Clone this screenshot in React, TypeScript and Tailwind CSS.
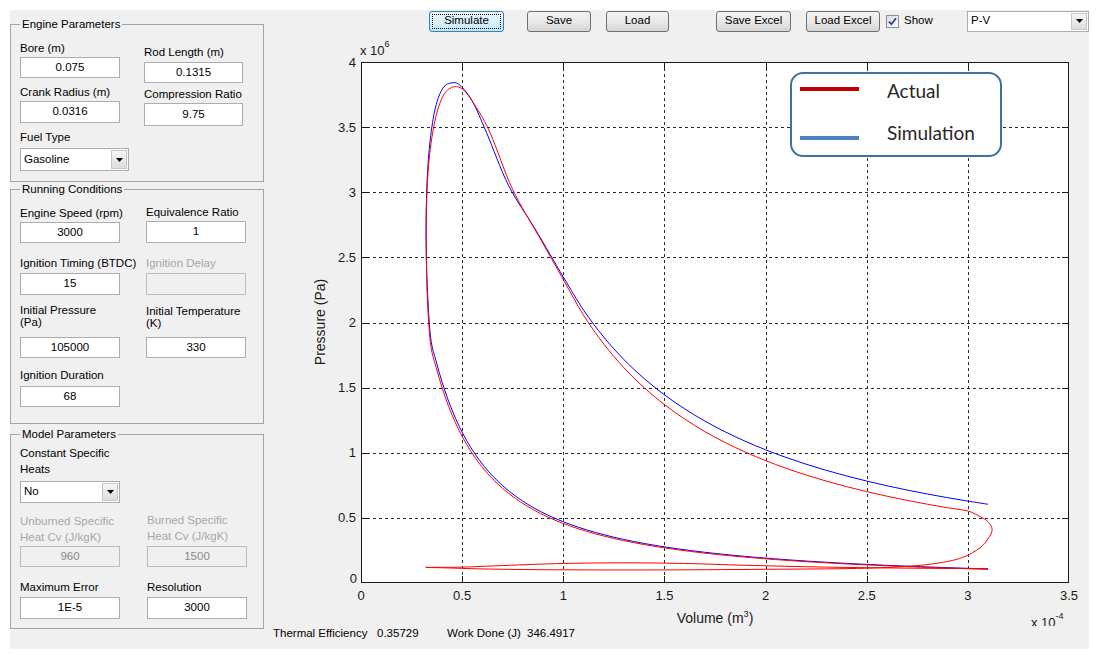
import React from "react";

type Pt = [number, number];

// plot box in page pixels
const X0 = 361;
const X1 = 1069;
const Y0 = 583;
const Y1 = 62;
const px = (v: number) => X0 + (v / 3.5) * (X1 - X0);
const py = (p: number) => Y0 - (p / 4) * (Y0 - Y1);

// catmull-rom through the points, as cubic beziers
function curve(pts: Pt[]) {
  const q = pts.map(([v, p]) => [px(v), py(p)]);
  let d = `M${q[0][0].toFixed(2)} ${q[0][1].toFixed(2)}`;
  for (let i = 0; i < q.length - 1; i++) {
    const a = q[i - 1] ?? q[i];
    const b = q[i];
    const c = q[i + 1];
    const e = q[i + 2] ?? c;
    d += ` C${(b[0] + (c[0] - a[0]) / 6).toFixed(2)} ${(b[1] + (c[1] - a[1]) / 6).toFixed(2)} ${(c[0] - (e[0] - b[0]) / 6).toFixed(2)} ${(c[1] - (e[1] - b[1]) / 6).toFixed(2)} ${c[0].toFixed(2)} ${c[1].toFixed(2)}`;
  }
  return d;
}

const range = (a: number, b: number, n: number) =>
  Array.from({ length: n }, (_, i) => a + ((b - a) * i) / (n - 1));

const compression = (k: number, n: number, stop: number): Pt[] =>
  range(Math.log(3.1), Math.log(stop), 30)
    .map(Math.exp)
    .map((v) => [v, k * Math.pow(3.1 / v, n)] as Pt);

const redMain: Pt[] = [
  ...compression(0.105, 1.3, 0.345),
  [0.33, 2.12],
  [0.324, 2.4],
  [0.322, 2.7],
  [0.326, 3.0],
  [0.34, 3.3],
  [0.37, 3.58],
  [0.41, 3.75],
  [0.46, 3.81],
  [0.51, 3.78],
  [0.57, 3.65],
  [0.64, 3.45],
  [0.75, 3.02],
  [0.88, 2.66],
  ...range(1.0, 3.0, 21).map((v) => [v, 2.33 * Math.pow(v, -1.31)] as Pt),
  [3.06, 0.51],
  [3.1, 0.47],
  [3.12, 0.41],
  [3.1, 0.34],
  [3.06, 0.27],
  [2.98, 0.2],
  [2.88, 0.16],
  [2.72, 0.13],
  [2.45, 0.112],
  [2.0, 0.105],
  [1.4, 0.1],
  [0.9, 0.102],
  [0.6, 0.108],
  [0.42, 0.116],
  [0.32, 0.12],
];

const redIntake: Pt[] = [
  [0.32, 0.12],
  [0.5, 0.122],
  [0.7, 0.134],
  [1.0, 0.15],
  [1.3, 0.155],
  [1.6, 0.15],
  [1.9, 0.136],
  [2.3, 0.122],
  [2.7, 0.114],
  [3.1, 0.11],
];

const blueMain: Pt[] = [
  ...compression(0.108, 1.3, 0.345),
  [0.33, 2.2],
  [0.323, 2.5],
  [0.322, 2.8],
  [0.327, 3.1],
  [0.342, 3.4],
  [0.368, 3.65],
  [0.405, 3.8],
  [0.45, 3.84],
  [0.49, 3.82],
  [0.55, 3.7],
  [0.62, 3.46],
  [0.73, 3.05],
  [0.86, 2.72],
  ...range(1.0, 3.1, 22).map((v) => [v, 2.35 * Math.pow(v, -1.2)] as Pt),
];

function Group({ title, className, children }: { title: string; className: string; children: React.ReactNode }) {
  return (
    <fieldset className={`border border-[#a5a5a5] ${className}`}>
      <legend className="ml-[9px] px-[2px] text-[11.5px] leading-[14px]">{title}</legend>
      {children}
    </fieldset>
  );
}

function Label({ className, children }: { className: string; children: React.ReactNode }) {
  return <div className={`text-[11.5px] whitespace-nowrap ${className}`}>{children}</div>;
}

function Box({ className, children }: { className: string; children?: React.ReactNode }) {
  return (
    <div className={`flex items-center justify-center border text-[11.5px] leading-none ${className}`}>{children}</div>
  );
}

function Popup({ className, value }: { className: string; value: string }) {
  return (
    <div className={`flex items-center border border-[#abadb3] bg-white p-[1px] ${className}`}>
      <span className="flex-1 pl-[2px] text-[11.5px] leading-none">{value}</span>
      <span className="flex h-full w-[16px] items-center justify-center border border-[#c8c8c8] bg-linear-to-b from-[#f6f6f6] to-[#dcdcdc]">
        <svg width="7" height="4" viewBox="0 0 7 4">
          <path d="M0 0h7L3.5 4z" fill="#000" />
        </svg>
      </span>
    </div>
  );
}

const field = "border-[#abadb3] bg-white text-black";
const off = "border-[#bcbcbc] bg-[#f0f0f0] text-[#8a8a8a]";

function LeftPanel() {
  return (
    <div className="flex w-[254px] shrink-0 flex-col">
      <Group title="Engine Parameters" className="mt-[7px] h-[165px]">
        <div className="flex pl-[9px]">
          <div className="flex w-[110px] flex-col">
            <Label className="mt-[10px] leading-[14px]">Bore (m)</Label>
            <Box className={`mt-[2px] h-[21px] w-[100px] ${field}`}>0.075</Box>
            <Label className="mt-[7px] leading-[14px]">Crank Radius (m)</Label>
            <Box className={`mt-[2px] h-[22px] w-[100px] ${field}`}>0.0316</Box>
            <Label className="mt-[7px] leading-[14px]">Fuel Type</Label>
            <Popup className="mt-[4px] h-[23px] w-[109px]" value="Gasoline" />
          </div>
          <div className="ml-[14px] flex w-[99px] flex-col">
            <Label className="mt-[14px] leading-[14px]">Rod Length (m)</Label>
            <Box className={`mt-[3px] h-[21px] w-[99px] ${field}`}>0.1315</Box>
            <Label className="mt-[4px] leading-[14px]">Compression Ratio</Label>
            <Box className={`mt-[2px] h-[23px] w-[99px] ${field}`}>9.75</Box>
          </div>
        </div>
      </Group>

      <Group title="Running Conditions" className="h-[242px]">
        <div className="flex pl-[9px]">
          <div className="flex w-[100px] flex-col">
            <Label className="mt-[10px] leading-[14px]">Engine Speed (rpm)</Label>
            <Box className={`mt-[2px] h-[21px] w-[100px] ${field}`}>3000</Box>
            <Label className="mt-[13px] leading-[14px]">Ignition Timing (BTDC)</Label>
            <Box className={`mt-[3px] h-[22px] w-[100px] ${field}`}>15</Box>
            <Label className="mt-[9px] leading-[12px]">
              Initial Pressure
              <br />
              (Pa)
            </Label>
            <Box className={`mt-[9px] h-[21px] w-[100px] ${field}`}>105000</Box>
            <Label className="mt-[10px] leading-[14px]">Ignition Duration</Label>
            <Box className={`mt-[4px] h-[21px] w-[100px] ${field}`}>68</Box>
          </div>
          <div className="ml-[26px] flex w-[100px] flex-col">
            <Label className="mt-[9px] leading-[14px]">Equivalence Ratio</Label>
            <Box className={`mt-[2px] h-[22px] w-[100px] ${field}`}>1</Box>
            <Label className="mt-[13px] leading-[14px] text-[#a8a8a8]">Ignition Delay</Label>
            <Box className={`mt-[3px] h-[22px] w-[100px] ${off}`} />
            <Label className="mt-[10px] leading-[12px]">
              Initial Temperature
              <br />
              (K)
            </Label>
            <Box className={`mt-[8px] h-[21px] w-[100px] ${field}`}>330</Box>
          </div>
        </div>
      </Group>

      <Group title="Model Parameters" className="mt-[3px] h-[202px]">
        <div className="flex pl-[9px]">
          <div className="flex w-[100px] flex-col">
            <Label className="mt-[4px] leading-[16px]">
              Constant Specific
              <br />
              Heats
            </Label>
            <Popup className="mt-[4px] h-[22px] w-[100px]" value="No" />
            <Label className="mt-[10px] leading-[16px] text-[#a8a8a8]">
              Unburned Specific
              <br />
              Heat Cv (J/kgK)
            </Label>
            <Box className={`mt-[1px] h-[21px] w-[100px] ${off}`}>960</Box>
            <Label className="mt-[13px] leading-[14px]">Maximum Error</Label>
            <Box className={`mt-[3px] h-[22px] w-[100px] ${field}`}>1E-5</Box>
          </div>
          <div className="ml-[27px] flex w-[100px] flex-col">
            <Label className="mt-[71px] leading-[16px] text-[#a8a8a8]">
              Burned Specific
              <br />
              Heat Cv (J/kgK)
            </Label>
            <Box className={`mt-[2px] h-[21px] w-[100px] ${off}`}>1500</Box>
            <Label className="mt-[13px] leading-[14px]">Resolution</Label>
            <Box className={`mt-[3px] h-[22px] w-[100px] ${field}`}>3000</Box>
          </div>
        </div>
      </Group>
    </div>
  );
}

const btn =
  "flex h-[21px] items-center justify-center rounded-[3px] border border-[#707070] bg-linear-to-b from-[#f3f3f3] via-[#e9e9e9] to-[#d4d4d4] text-[11.5px] leading-none";

function Toolbar() {
  return (
    <div className="flex h-[22px] items-center">
      <div className="ml-[165px] flex h-[21px] w-[75px] items-center justify-center rounded-[3px] border border-[#3c7fb1] bg-linear-to-b from-[#eaf6fd] via-[#d9effc] to-[#bee6fd] text-[11.5px] leading-none outline-1 outline-dotted outline-black outline-offset-[-4px]">
        Simulate
      </div>
      <div className={`ml-[23px] w-[64px] ${btn}`}>Save</div>
      <div className={`ml-[15px] w-[63px] ${btn}`}>Load</div>
      <div className={`ml-[47px] w-[75px] ${btn}`}>Save Excel</div>
      <div className={`ml-[15px] w-[74px] ${btn}`}>Load Excel</div>
      <div className="ml-[6px] flex h-[13px] w-[13px] items-center justify-center border border-[#8e8f8f] bg-linear-to-br from-[#dedede] to-[#fbfbfb]">
        <svg width="9" height="9" viewBox="0 0 9 9">
          <path d="M1 4.6 L3.4 7.2 L8 1.2" fill="none" stroke="#2a3f8c" strokeWidth="1.7" />
        </svg>
      </div>
      <span className="ml-[5px] w-[31px] text-[11.5px] leading-none">Show</span>
      <Popup className="ml-[32px] h-[21px] w-[122px]" value="P-V" />
    </div>
  );
}

function Chart() {
  const xs = [0.5, 1, 1.5, 2, 2.5, 3];
  const ys = [0.5, 1, 1.5, 2, 2.5, 3, 3.5];
  const xLabels: [number, string][] = [
    [0, "0"],
    [0.5, "0.5"],
    [1, "1"],
    [1.5, "1.5"],
    [2, "2"],
    [2.5, "2.5"],
    [3, "3"],
    [3.5, "3.5"],
  ];
  const yLabels: [number, string][] = [
    [0.5, "0.5"],
    [1, "1"],
    [1.5, "1.5"],
    [2, "2"],
    [2.5, "2.5"],
    [3, "3"],
    [3.5, "3.5"],
    [4, "4"],
  ];
  const gx = (v: number) => Math.round(px(v)) + 0.5;
  const gy = (p: number) => Math.round(py(p)) + 0.5;
  return (
    <svg width="825" height="594" className="block">
      <g transform="translate(-264 -32)" fontFamily="'Liberation Sans', Arial, sans-serif" fill="#1a1a1a">
        <rect x={X0} y={Y1} width={X1 - X0} height={Y0 - Y1} fill="#fff" />
        {xs.map((v) => (
          <line key={`gx${v}`} x1={gx(v)} x2={gx(v)} y1={Y1} y2={Y0} stroke="#2a2a2a" strokeDasharray="3 3" />
        ))}
        {ys.map((p) => (
          <line key={`gy${p}`} x1={X0} x2={X1} y1={gy(p)} y2={gy(p)} stroke="#2a2a2a" strokeDasharray="3 3" />
        ))}
        {xs.map((v) => (
          <g key={`tx${v}`} stroke="#1a1a1a">
            <line x1={gx(v)} x2={gx(v)} y1={Y0} y2={Y0 - 7} />
            <line x1={gx(v)} x2={gx(v)} y1={Y1} y2={Y1 + 7} />
          </g>
        ))}
        {ys.map((p) => (
          <g key={`ty${p}`} stroke="#1a1a1a">
            <line x1={X0} x2={X0 + 7} y1={gy(p)} y2={gy(p)} />
            <line x1={X1} x2={X1 - 7} y1={gy(p)} y2={gy(p)} />
          </g>
        ))}

        <path d={curve(blueMain)} fill="none" stroke="#0000ff" strokeWidth="1" />
        <path d={curve(redMain)} fill="none" stroke="#ff0000" strokeWidth="1" />
        <path d={curve(redIntake)} fill="none" stroke="#ff0000" strokeWidth="1" />

        <rect x={X0 + 0.5} y={Y1 + 0.5} width={X1 - X0 - 1} height={Y0 - Y1 - 1} fill="none" stroke="#1a1a1a" />

        {yLabels.map(([p, t]) => (
          <text key={`ly${p}`} x={356} y={py(p)} fontSize="13" textAnchor="end" dominantBaseline="central">
            {t}
          </text>
        ))}
        <text x={357} y={578} fontSize="13" textAnchor="end" dominantBaseline="central">
          0
        </text>
        {xLabels.map(([v, t]) => (
          <text key={`lx${v}`} x={px(v)} y={595} fontSize="13" textAnchor="middle" dominantBaseline="central">
            {t}
          </text>
        ))}
        <text x={360} y={55} fontSize="13">
          x 10
          <tspan fontSize="9" dy="-8">
            6
          </tspan>
        </text>
        <text x={1031} y={627} fontSize="13">
          x 10
          <tspan fontSize="9" dy="-8">
            -4
          </tspan>
        </text>
        <text x={715} y={623} fontSize="14" textAnchor="middle">
          Volume (m
          <tspan fontSize="9" dy="-6">
            3
          </tspan>
          <tspan dy="6">)</tspan>
        </text>
        <text
          x={0}
          y={0}
          fontSize="14"
          textAnchor="middle"
          dominantBaseline="central"
          transform="translate(320 322) rotate(-90)"
        >
          Pressure (Pa)
        </text>

        {/* legend pasted over the axes */}
        <rect x={791} y={73} width={210} height={83} rx={12} fill="#fff" stroke="#41719c" strokeWidth="2" />
        <line x1={800} x2={859} y1={89} y2={89} stroke="#c00000" strokeWidth="4" />
        <line x1={800} x2={859} y1={138} y2={138} stroke="#4f81bd" strokeWidth="4" />
        <text x={887} y={90} fontSize="19" fontFamily="Lato, sans-serif" fill="#262626" dominantBaseline="central">
          Actual
        </text>
        <text x={887} y={132} fontSize="19" fontFamily="Lato, sans-serif" fill="#262626" dominantBaseline="central">
          Simulation
        </text>
      </g>
    </svg>
  );
}

export default function App() {
  return (
    <div className="h-[658px] w-[1102px] bg-white pt-[10px] pl-[10px] font-['Liberation_Sans',Arial,sans-serif] text-black">
      <div className="flex h-[639px] w-[1079px] bg-[#f0f0f0]">
        <LeftPanel />
        <div className="flex w-[825px] flex-col">
          <Toolbar />
          <Chart />
          <div className="flex h-[14px] items-center pl-[9px] text-[11.5px] leading-[14px]">
            <span className="w-[104px]">Thermal Efficiency</span>
            <span className="w-[70px]">0.35729</span>
            <span className="w-[80px]">Work Done (J)</span>
            <span>346.4917</span>
          </div>
        </div>
      </div>
    </div>
  );
}
